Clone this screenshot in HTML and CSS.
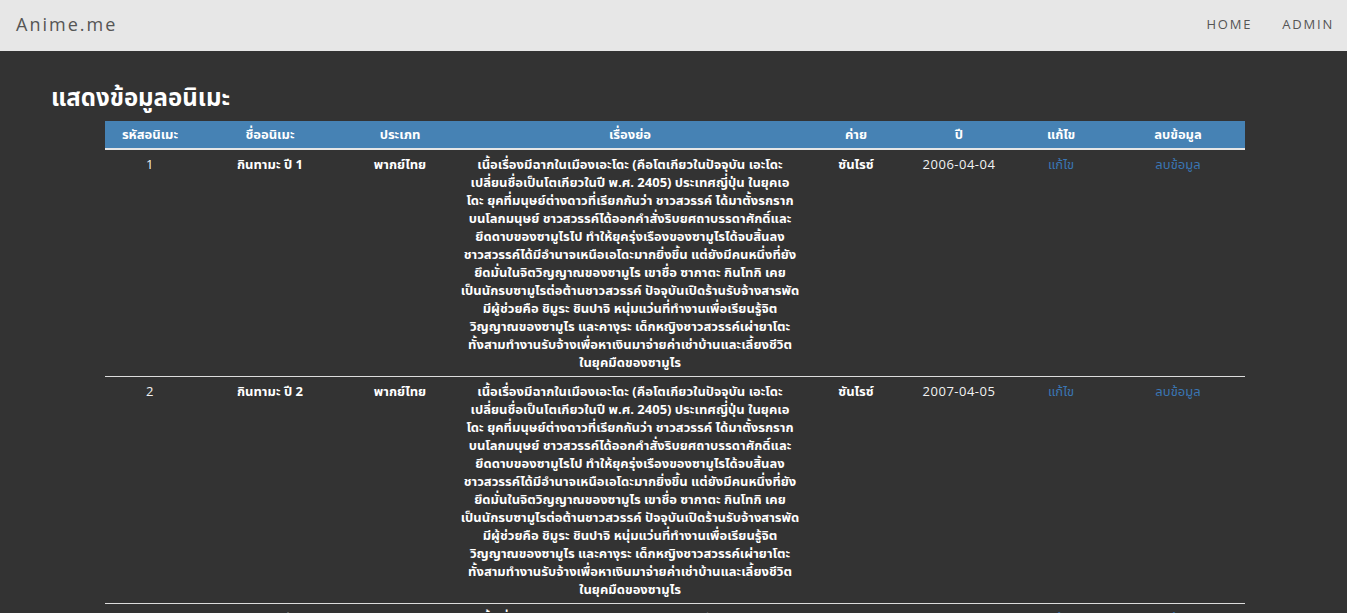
FILE: index.html
```html
<!DOCTYPE html>
<html lang="th">
<head>
<meta charset="utf-8">
<title>Anime.me</title>
<link rel="stylesheet" href="styles.css">
</head>
<body>
<nav class="navbar">
  <a class="brand" href="#">Anime.me</a>
  <ul class="nav-links">
    <li><a href="#">HOME</a></li>
    <li><a href="#">ADMIN</a></li>
  </ul>
</nav>
<main class="content">
  <h1 class="title">แสดงข้อมูลอนิเมะ</h1>
  <table class="anime-table">
    <colgroup>
      <col class="c-id"><col class="c-name"><col class="c-type"><col class="c-story"><col class="c-studio"><col class="c-year"><col class="c-edit"><col class="c-del">
    </colgroup>
    <thead>
      <tr>
        <th>รหัสอนิเมะ</th><th>ชื่ออนิเมะ</th><th>ประเภท</th><th>เรื่องย่อ</th><th>ค่าย</th><th>ปี</th><th>แก้ไข</th><th>ลบข้อมูล</th>
      </tr>
    </thead>
    <tbody>
      <tr>
        <td class="num">1</td>
        <td class="th-bold">กินทามะ ปี 1</td>
        <td class="th-bold">พากย์ไทย</td>
        <td class="th-bold story">เนื้อเรื่องมีฉากในเมืองเอะโดะ (คือโตเกียวในปัจจุบัน เอะโดะ<br>เปลี่ยนชื่อเป็นโตเกียวในปี พ.ศ. 2405) ประเทศญี่ปุ่น ในยุคเอ<br>โดะ ยุคที่มนุษย์ต่างดาวที่เรียกกันว่า ชาวสวรรค์ ได้มาตั้งรกราก<br>บนโลกมนุษย์ ชาวสวรรค์ได้ออกคำสั่งริบยศถาบรรดาศักดิ์และ<br>ยึดดาบของซามูไรไป ทำให้ยุครุ่งเรืองของซามูไรได้จบสิ้นลง<br>ชาวสวรรค์ได้มีอำนาจเหนือเอโดะมากยิ่งขึ้น แต่ยังมีคนหนึ่งที่ยัง<br>ยึดมั่นในจิตวิญญาณของซามูไร เขาชื่อ ซากาตะ กินโทกิ เคย<br>เป็นนักรบซามูไรต่อต้านชาวสวรรค์ ปัจจุบันเปิดร้านรับจ้างสารพัด<br>มีผู้ช่วยคือ ชิมูระ ชินปาจิ หนุ่มแว่นที่ทำงานเพื่อเรียนรู้จิต<br>วิญญาณของซามูไร และคางุระ เด็กหญิงชาวสวรรค์เผ่ายาโตะ<br>ทั้งสามทำงานรับจ้างเพื่อหาเงินมาจ่ายค่าเช่าบ้านและเลี้ยงชีวิต<br>ในยุคมืดของซามูไร</td>
        <td class="th-bold">ซันไรซ์</td>
        <td class="num">2006-04-04</td>
        <td><a class="link" href="#">แก้ไข</a></td>
        <td><a class="link" href="#">ลบข้อมูล</a></td>
      </tr>
      <tr>
        <td class="num">2</td>
        <td class="th-bold">กินทามะ ปี 2</td>
        <td class="th-bold">พากย์ไทย</td>
        <td class="th-bold story">เนื้อเรื่องมีฉากในเมืองเอะโดะ (คือโตเกียวในปัจจุบัน เอะโดะ<br>เปลี่ยนชื่อเป็นโตเกียวในปี พ.ศ. 2405) ประเทศญี่ปุ่น ในยุคเอ<br>โดะ ยุคที่มนุษย์ต่างดาวที่เรียกกันว่า ชาวสวรรค์ ได้มาตั้งรกราก<br>บนโลกมนุษย์ ชาวสวรรค์ได้ออกคำสั่งริบยศถาบรรดาศักดิ์และ<br>ยึดดาบของซามูไรไป ทำให้ยุครุ่งเรืองของซามูไรได้จบสิ้นลง<br>ชาวสวรรค์ได้มีอำนาจเหนือเอโดะมากยิ่งขึ้น แต่ยังมีคนหนึ่งที่ยัง<br>ยึดมั่นในจิตวิญญาณของซามูไร เขาชื่อ ซากาตะ กินโทกิ เคย<br>เป็นนักรบซามูไรต่อต้านชาวสวรรค์ ปัจจุบันเปิดร้านรับจ้างสารพัด<br>มีผู้ช่วยคือ ชิมูระ ชินปาจิ หนุ่มแว่นที่ทำงานเพื่อเรียนรู้จิต<br>วิญญาณของซามูไร และคางุระ เด็กหญิงชาวสวรรค์เผ่ายาโตะ<br>ทั้งสามทำงานรับจ้างเพื่อหาเงินมาจ่ายค่าเช่าบ้านและเลี้ยงชีวิต<br>ในยุคมืดของซามูไร</td>
        <td class="th-bold">ซันไรซ์</td>
        <td class="num">2007-04-05</td>
        <td><a class="link" href="#">แก้ไข</a></td>
        <td><a class="link" href="#">ลบข้อมูล</a></td>
      </tr>
      <tr>
        <td class="num">3</td>
        <td class="th-bold">กินทามะ ปี 3</td>
        <td class="th-bold">พากย์ไทย</td>
        <td class="th-bold story">เนื้อเรื่องมีฉากในเมืองเอะโดะ (คือโตเกียวในปัจจุบัน เอะโดะ</td>
        <td class="th-bold">ซันไรซ์</td>
        <td class="num">2008-04-04</td>
        <td><a class="link" href="#">แก้ไข</a></td>
        <td><a class="link" href="#">ลบข้อมูล</a></td>
      </tr>
    </tbody>
  </table>
</main>
</body>
</html>
```

FILE: styles.css
```css
html, body {
  margin: 0;
  padding: 0;
}
body {
  background: #333333;
  color: #ffffff;
  font-family: "Open Sans", "Noto Sans", "Noto Sans Thai", Tahoma, sans-serif;
  font-size: 13px;
}
.navbar {
  height: 51px;
  background: #e7e7e7;
  display: flex;
  align-items: center;
  justify-content: space-between;
  padding: 0 13px 0 16px;
  box-sizing: border-box;
}
.brand {
  color: #555555;
  font-size: 18px;
  letter-spacing: 2px;
  text-decoration: none;
  font-family: "Open Sans", sans-serif;
  margin-top: -4px;
}
.nav-links {
  list-style: none;
  display: flex;
  gap: 30px;
  margin: -4px 0 0 0;
  padding: 0;
}
.nav-links a {
  color: #555555;
  text-decoration: none;
  font-size: 13px;
  letter-spacing: 1.8px;
  font-family: "Open Sans", sans-serif;
}
.title {
  margin: 0;
  padding: 31px 51px 9px;
  font-size: 24px;
  font-weight: bold;
  line-height: 30px;
  color: #ffffff;
}
.anime-table {
  width: 1140px;
  margin: 0 0 0 105px;
  border-collapse: collapse;
  table-layout: fixed;
}
.c-id { width: 90px; }
.c-name { width: 150px; }
.c-type { width: 110px; }
.c-story { width: 350px; }
.c-studio { width: 102px; }
.c-year { width: 104px; }
.c-edit { width: 100px; }
.c-del { width: 134px; }
.anime-table th {
  background: #4682b4;
  color: #ffffff;
  font-weight: bold;
  font-size: 13px;
  height: 28px;
  padding: 0 8px;
  text-align: center;
  border-bottom: 2px solid #e6e6e6;
  box-sizing: border-box;
}
.anime-table td {
  padding: 5px 8px 5px;
  text-align: center;
  vertical-align: top;
  line-height: 18px;
  font-size: 13px;
  border-bottom: 1px solid #dddddd;
}
.th-bold {
  font-weight: bold;
}
.anime-table td.story {
  padding-left: 2px;
  padding-right: 2px;
  white-space: nowrap;
}
.num {
  font-weight: normal;
  font-size: 13.5px;
  letter-spacing: 0.5px;
  color: #f2f2f2;
}
.link {
  color: #3a76b4;
  text-decoration: none;
}
```
